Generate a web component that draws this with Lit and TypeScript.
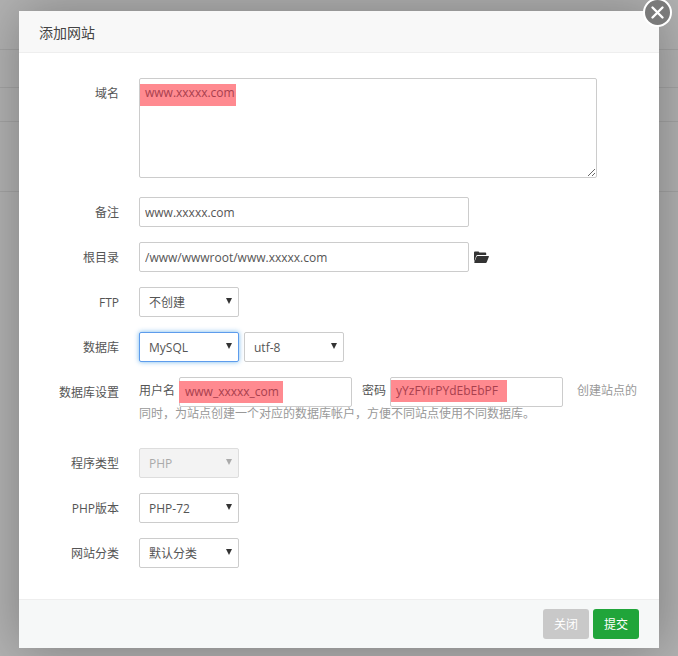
import { LitElement, html, css } from 'lit';
import { customElement } from 'lit/decorators.js';

@customElement('app-root')
export class AppRoot extends LitElement {
  static styles = css`
    :host {
      display: block;
      position: relative;
      height: 656px;
      overflow: hidden;
      box-sizing: border-box;
      padding: 11px 19px 8px;
      background: #b2b2b2;
      font-family: 'Open Sans', 'Noto Sans CJK SC', sans-serif;
      font-size: 12px;
      color: #555;
    }
    * {
      box-sizing: border-box;
    }
    .backdrop-line {
      position: absolute;
      left: 0;
      right: 0;
      height: 1px;
      background: rgba(0, 0, 0, 0.08);
    }
    .modal {
      position: relative;
      display: flex;
      flex-direction: column;
      width: 640px;
      height: 637px;
      background: #fff;
      box-shadow: 1px 1px 50px rgba(0, 0, 0, 0.3);
    }
    .title {
      height: 42px;
      padding-left: 20px;
      line-height: 43px;
      font-size: 14px;
      color: #444;
      background: #f8f8f8;
      border-bottom: 1px solid #eee;
    }
    .close {
      position: absolute;
      top: -13px;
      right: -13px;
      display: flex;
      align-items: center;
      justify-content: center;
      width: 29px;
      height: 29px;
      padding: 0;
      border: 2px solid #fff;
      border-radius: 50%;
      background: #7a7a7a;
    }
    .body {
      flex: 1;
      padding-top: 25px;
    }
    .row {
      display: flex;
      margin-bottom: 15px;
    }
    .row.tall {
      margin-bottom: 19px;
    }
    .label {
      flex: none;
      width: 100px;
      height: 30px;
      margin-right: 20px;
      line-height: 32px;
      text-align: right;
    }
    .cell {
      display: flex;
      align-items: center;
      gap: 5px;
      width: 500px;
    }
    input,
    textarea,
    select {
      display: block;
      height: 30px;
      margin: 0;
      border: 1px solid #ccc;
      border-radius: 2px;
      outline: none;
      background: #fff;
      font: inherit;
      color: #555;
    }
    input {
      padding: 0 5px;
    }
    .wide {
      width: 330px;
    }
    textarea {
      width: 458px;
      height: 100px;
      padding: 5px;
    }
    .select {
      position: relative;
      display: block;
      width: 100px;
    }
    .select::after {
      content: '';
      position: absolute;
      top: 11px;
      right: 7px;
      border-style: solid;
      border-width: 6px 3px 0;
      border-color: #333 transparent transparent;
    }
    .select.off::after {
      border-top-color: #aaa;
    }
    select {
      width: 100%;
      padding: 0 0 0 9px;
      appearance: none;
    }
    select:disabled {
      background: #f3f3f3;
      border-color: #ddd;
      color: #aaa;
      opacity: 1;
    }
    .focus select {
      border-color: #5d9cec;
      box-shadow: 0 0 5px rgba(102, 175, 233, 0.9);
    }
    .marked {
      position: relative;
      display: inline-block;
      vertical-align: middle;
    }
    .marked input {
      width: 173px;
    }
    mark {
      position: absolute;
      display: block;
      height: 22px;
      line-height: 22px;
      padding: 0 3px 0 5px;
      background: #ff8a90;
      color: #a8404e;
      white-space: nowrap;
    }
    .domain-mark {
      top: 6px;
      left: 1px;
      width: 96px;
      line-height: 17px;
    }
    .user-mark {
      top: 4px;
      left: 0;
      width: 104px;
      padding-left: 6px;
    }
    .pass-mark {
      top: 3px;
      left: 1px;
      width: 116px;
    }
    .settings {
      display: block;
      height: 56px;
      width: 500px;
      line-height: 14px;
      color: #999;
    }
    .inline-label {
      color: #555;
      margin-right: 4px;
    }
    .pass-label {
      margin-left: 10px;
    }
    .hint {
      margin-left: 14px;
    }
    .footer {
      display: flex;
      justify-content: flex-end;
      gap: 4px;
      height: 49px;
      padding: 9px 20px 0;
      background: #f6f8f8;
      border-top: 1px solid #eee;
    }
    button.action {
      width: 46px;
      height: 30px;
      padding: 0;
      border: none;
      border-radius: 3px;
      background: #c9c9c9;
      color: #fff;
      font: inherit;
    }
    button.submit {
      background: #20a53a;
    }
  `;

  private option(text: string) {
    return html`<span class="select"><select aria-label=${text}><option>${text}</option></select></span>`;
  }

  render() {
    return html`
      ${[49, 87, 121, 191].map(
        (y) => html`<div class="backdrop-line" style="top: ${y}px"></div>`
      )}
      <div class="modal">
        <div class="title">添加网站</div>
        <button class="close" aria-label="关闭">
          <svg width="15" height="15" viewBox="0 0 15 15">
            <path d="M2.5 2.5l10 10M12.5 2.5l-10 10" stroke="#fff" stroke-width="2.4" stroke-linecap="round" fill="none" />
          </svg>
        </button>
        <div class="body">
          <div class="row tall">
            <div class="label">域名</div>
            <div class="cell">
              <span class="marked">
                <textarea aria-label="域名"></textarea>
                <mark class="domain-mark">www.xxxxx.com</mark>
              </span>
            </div>
          </div>
          <div class="row">
            <div class="label">备注</div>
            <div class="cell"><input class="wide" value="www.xxxxx.com" /></div>
          </div>
          <div class="row">
            <div class="label">根目录</div>
            <div class="cell">
              <input class="wide" value="/www/wwwroot/www.xxxxx.com" />
              <svg width="15" height="12" viewBox="0 0 15 12">
                <path d="M0 11V1.600C0 .9.5.4 1.200.4h3c.6 0 1 .4 1.100 1h5.800c.7 0 1.100.4 1.100 1V4H3.600c-.6 0-1 .2-1.300.8L0 11z" fill="#333" />
                <path d="M3.400 5h11c.5 0 .7.4.5.8l-2.200 5.400c-.1.4-.5.7-1 .7H.8c-.5 0-.7-.3-.5-.7l2.200-5.400c.2-.5.5-.8.9-.8z" fill="#333" />
              </svg>
            </div>
          </div>
          <div class="row">
            <div class="label">FTP</div>
            <div class="cell">${this.option('不创建')}</div>
          </div>
          <div class="row">
            <div class="label">数据库</div>
            <div class="cell">
              <span class="select focus"><select aria-label="数据库"><option>MySQL</option></select></span>
              ${this.option('utf-8')}
            </div>
          </div>
          <div class="row">
            <div class="label">数据库设置</div>
            <div class="settings">
              <span class="inline-label">用户名</span><span class="marked"><input aria-label="用户名" /><mark class="user-mark">www_xxxxx_com</mark></span><span class="inline-label pass-label">密码</span><span class="marked"><input aria-label="密码" /><mark class="pass-mark">yYzFYirPYdEbEbPF</mark></span><span class="hint">创建站点的</span><span>同时，为站点创建一个对应的数据库帐户，方便不同站点使用不同数据库。</span>
            </div>
          </div>
          <div class="row">
            <div class="label">程序类型</div>
            <div class="cell">
              <span class="select off"><select disabled aria-label="程序类型"><option>PHP</option></select></span>
            </div>
          </div>
          <div class="row">
            <div class="label">PHP版本</div>
            <div class="cell">${this.option('PHP-72')}</div>
          </div>
          <div class="row">
            <div class="label">网站分类</div>
            <div class="cell">${this.option('默认分类')}</div>
          </div>
        </div>
        <div class="footer">
          <button class="action">关闭</button>
          <button class="action submit">提交</button>
        </div>
      </div>
    `;
  }
}
